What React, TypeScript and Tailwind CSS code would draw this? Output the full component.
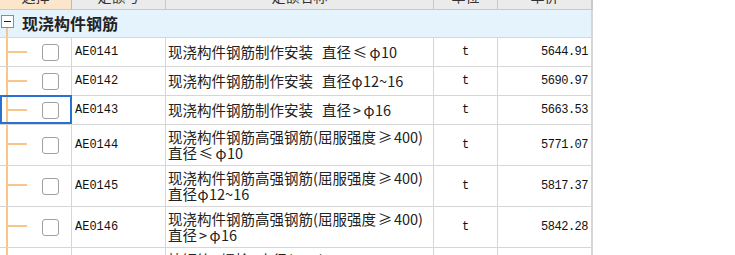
import React from "react";

type Row = { code: string; name: string[]; price: string; selected?: boolean };

const rows: Row[] = [
  { code: "AE0141", name: ["现浇构件钢筋制作安装 直径≤φ10"], price: "5644.91" },
  { code: "AE0142", name: ["现浇构件钢筋制作安装 直径φ12~16"], price: "5690.97" },
  { code: "AE0143", name: ["现浇构件钢筋制作安装 直径>φ16"], price: "5663.53", selected: true },
  { code: "AE0144", name: ["现浇构件钢筋高强钢筋(屈服强度≥400)", "直径≤φ10"], price: "5771.07" },
  { code: "AE0145", name: ["现浇构件钢筋高强钢筋(屈服强度≥400)", "直径φ12~16"], price: "5817.37" },
  { code: "AE0146", name: ["现浇构件钢筋高强钢筋(屈服强度≥400)", "直径>φ16"], price: "5842.28" },
  { code: "AE0147", name: ["植钢筋 螺栓 直径(mm)", "φ16"], price: "" },
];

const cjk = "font-['Noto_Sans_CJK_SC',sans-serif]";
const mono = "font-['Liberation_Mono','Noto_Sans_CJK_SC',monospace]";
const line = "border-[#d6d6d6]";

function Name({ text }: { text: string }) {
  const parts: React.ReactNode[] = [];
  let buf = "";
  const flush = () => {
    if (buf) parts.push(buf);
    buf = "";
  };
  Array.from(text).forEach((ch, i) => {
    if (ch === "≤" || ch === "≥") {
      flush();
      parts.push(
        <span key={i} className="inline-block w-[18px] text-center">
          {ch}
        </span>
      );
    } else if (ch === "φ" || ch === ">") {
      flush();
      parts.push(
        <span key={i} className="inline-block w-[12px] text-center">
          {ch}
        </span>
      );
    } else if (ch === " ") {
      flush();
      parts.push(<span key={i} className="inline-block w-[9px]">{" "}</span>);
    } else {
      buf += ch;
    }
  });
  flush();
  return <div className="whitespace-nowrap">{parts}</div>;
}

function DataRow({ r }: { r: Row }) {
  const tall = r.name.length > 1;
  const h = tall ? "h-[41px]" : "h-[29px]";
  return (
    <div className={`flex ${h}`}>
      <div className={`relative w-[72px] shrink-0 flex items-stretch border-r border-b ${line}`}>
        <div className="w-[6px] shrink-0" />
        <div className="w-[2px] shrink-0 bg-[#f8c689]" />
        <div className={`w-[19px] shrink-0 ${tall ? "pt-[18px]" : "pt-[13px]"}`}>
          <div className="h-[2px] w-full bg-[#f8c689]" />
        </div>
        <div className="flex items-center ml-[15px]">
          <div className="w-[17px] h-[17px] rounded-[3px] border border-[#a0a0a0] bg-white" />
        </div>
        {r.selected && (
          <div className="absolute -top-px left-0 -right-px bottom-0 border-2 border-[#2a71d6]" />
        )}
      </div>
      <div className={`w-[94px] shrink-0 flex items-center pl-[3px] border-r border-b ${line} ${mono} text-[12px] text-[#111]`}>
        {r.code}
      </div>
      <div className={`w-[268px] shrink-0 flex flex-col justify-center pl-[2px] border-r border-b ${line} ${cjk} text-[14.5px] leading-[16px] text-[#222]`}>
        {r.name.map((n, i) => (
          <Name key={i} text={n} />
        ))}
      </div>
      <div className={`w-[64px] shrink-0 flex items-center justify-center border-r border-b ${line} ${mono} text-[12px] text-[#111]`}>
        t
      </div>
      <div className={`w-[95px] shrink-0 flex items-center justify-end pr-[3px] border-r-2 border-b ${line} ${mono} text-[12px] tracking-[-0.5px] text-[#111]`}>
        {r.price}
      </div>
    </div>
  );
}

export default function App() {
  return (
    <div className="w-[735px] h-[255px] overflow-hidden bg-white">
      <div className="w-[593px] -mt-[16px]">
        {/* header */}
        <div className={`flex h-[26px] ${cjk} text-[14px] text-[#333]`}>
          <div className="w-[72px] shrink-0 flex items-center justify-center bg-[#fbe6cc] border-r border-b border-r-[#9cc1e6] border-b-[#c9c9c9]">选择</div>
          <div className="w-[94px] shrink-0 flex items-center justify-center bg-[#ebebeb] border-r border-b border-[#c9c9c9]">定额号</div>
          <div className="w-[268px] shrink-0 flex items-center justify-center bg-[#ebebeb] border-r border-b border-[#c9c9c9]">定额名称</div>
          <div className="w-[64px] shrink-0 flex items-center justify-center bg-[#ebebeb] border-r border-b border-[#c9c9c9]">单位</div>
          <div className="w-[95px] shrink-0 flex items-center justify-center bg-[#ebebeb] border-r-2 border-b border-[#c9c9c9]">单价</div>
        </div>
        {/* group row */}
        <div className={`flex h-[28px] bg-[#e5f3fd] border-b border-r-2 ${line}`}>
          <div className="flex flex-col w-[15px] shrink-0 pt-[5px] pl-[1px]">
            <div className="w-[13px] h-[13px] border border-[#8c8c8c] bg-white flex items-center justify-center">
              <div className="w-[7px] h-px bg-[#222]" />
            </div>
            <div className="flex-1 w-[2px] ml-[5px] bg-[#f8c689]" />
          </div>
          <div className={`self-center ml-[7px] pb-[2px] ${cjk} font-bold text-[16px] leading-[18px] text-[#222]`}>
            现浇构件钢筋
          </div>
        </div>
        {rows.map((r) => (
          <DataRow key={r.code} r={r} />
        ))}
      </div>
    </div>
  );
}
